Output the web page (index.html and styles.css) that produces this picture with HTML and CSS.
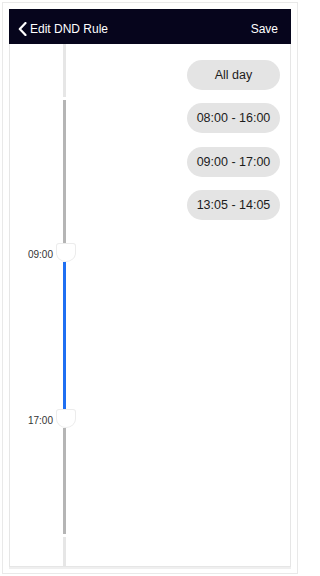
FILE: index.html
```html
<!DOCTYPE html>
<html lang="en">
<head>
<meta charset="utf-8">
<title>Edit DND Rule</title>
<link rel="stylesheet" href="styles.css">
</head>
<body>
<div class="frame">
  <div class="phone">
    <header class="navbar">
      <div class="nav-back">
        <svg class="chevron" width="9" height="14" viewBox="0 0 9 14"><polyline points="7.5,1 1.8,7 7.5,13" fill="none" stroke="#fff" stroke-width="2.2" stroke-linecap="round" stroke-linejoin="round"/></svg>
        <span>Edit DND Rule</span>
      </div>
      <span class="nav-save">Save</span>
    </header>
    <main class="content">
      <div class="timeline">
        <div class="row"><span class="label"></span><div class="track"><div class="seg seg-light seg-top"></div></div></div>
        <div class="row"><span class="label"></span><div class="track gap3"></div></div>
        <div class="row"><span class="label"></span><div class="track"><div class="seg seg-dark seg-a"></div></div></div>
        <div class="row handle-row"><span class="label">09:00</span><div class="track"><div class="handle"></div></div></div>
        <div class="row"><span class="label"></span><div class="track"><div class="seg seg-blue"></div></div></div>
        <div class="row handle-row"><span class="label">17:00</span><div class="track"><div class="handle"></div></div></div>
        <div class="row"><span class="label"></span><div class="track"><div class="seg seg-dark seg-b"></div></div></div>
        <div class="row"><span class="label"></span><div class="track gap3"></div></div>
        <div class="row"><span class="label"></span><div class="track"><div class="seg seg-light seg-bottom"></div></div></div>
      </div>
      <div class="presets">
        <div class="pill">All day</div>
        <div class="pill">08:00 - 16:00</div>
        <div class="pill">09:00 - 17:00</div>
        <div class="pill">13:05 - 14:05</div>
      </div>
    </main>
  </div>
</div>
</body>
</html>
```
FILE: styles.css
```css
html, body {
  margin: 0;
  padding: 0;
  background: #fff;
}
body {
  padding: 2px;
  width: 300px;
  height: 576px;
  box-sizing: border-box;
  font-family: "Liberation Sans", Arial, sans-serif;
}
.frame {
  border: 1px solid #e9e9e9;
  padding: 6px;
  height: 572px;
  box-sizing: border-box;
}
.phone {
  height: 558px;
  display: flex;
  flex-direction: column;
  box-shadow: 0 2px 0 #efefef;
}
.navbar {
  height: 35px;
  box-sizing: border-box;
  padding: 5px 13px 0 9px;
  background: #06051c;
  color: #fff;
  display: flex;
  align-items: center;
  justify-content: space-between;
  font-size: 12px;
  flex: none;
}
.nav-back {
  display: flex;
  align-items: center;
  gap: 3px;
}
.chevron {
  display: block;
  margin-left: 0;
}
.content {
  flex: 1;
  display: flex;
  border: 1px solid #e6e6e6;
  border-top: none;
}
.timeline {
  width: 66px;
  display: flex;
  flex-direction: column;
  flex: none;
}
.row {
  display: flex;
  align-items: center;
}
.label {
  width: 46px;
  box-sizing: border-box;
  padding-right: 3px;
  text-align: right;
  font-size: 10px;
  color: #333;
}
.handle-row .label {
  padding-top: 4px;
}
.track {
  width: 20px;
  display: flex;
}
.gap3 {
  height: 3px;
}
.seg {
  width: 3px;
  margin-left: 7px;
}
.seg-light { background: #e6e6e6; }
.seg-dark { background: #b5b5b5; }
.seg-blue { background: #1f6ff2; height: 147px; }
.seg-top { height: 53px; }
.seg-a { height: 143px; }
.seg-b { height: 106px; }
.seg-bottom { height: 29px; }
.handle {
  width: 20px;
  height: 19px;
  box-sizing: border-box;
  background: #fff;
  border: 1px solid #ececec;
  border-radius: 3px 3px 10px 10px / 3px 3px 9px 9px;
}
.presets {
  flex: 1;
  display: flex;
  flex-direction: column;
  align-items: flex-end;
  gap: 13.4px;
  padding: 16px 10px 0 0;
}
.pill {
  width: 93px;
  height: 30px;
  border-radius: 15px;
  background: #e4e4e4;
  color: #1c1c1c;
  font-size: 12.5px;
  display: flex;
  align-items: center;
  justify-content: center;
}
```
